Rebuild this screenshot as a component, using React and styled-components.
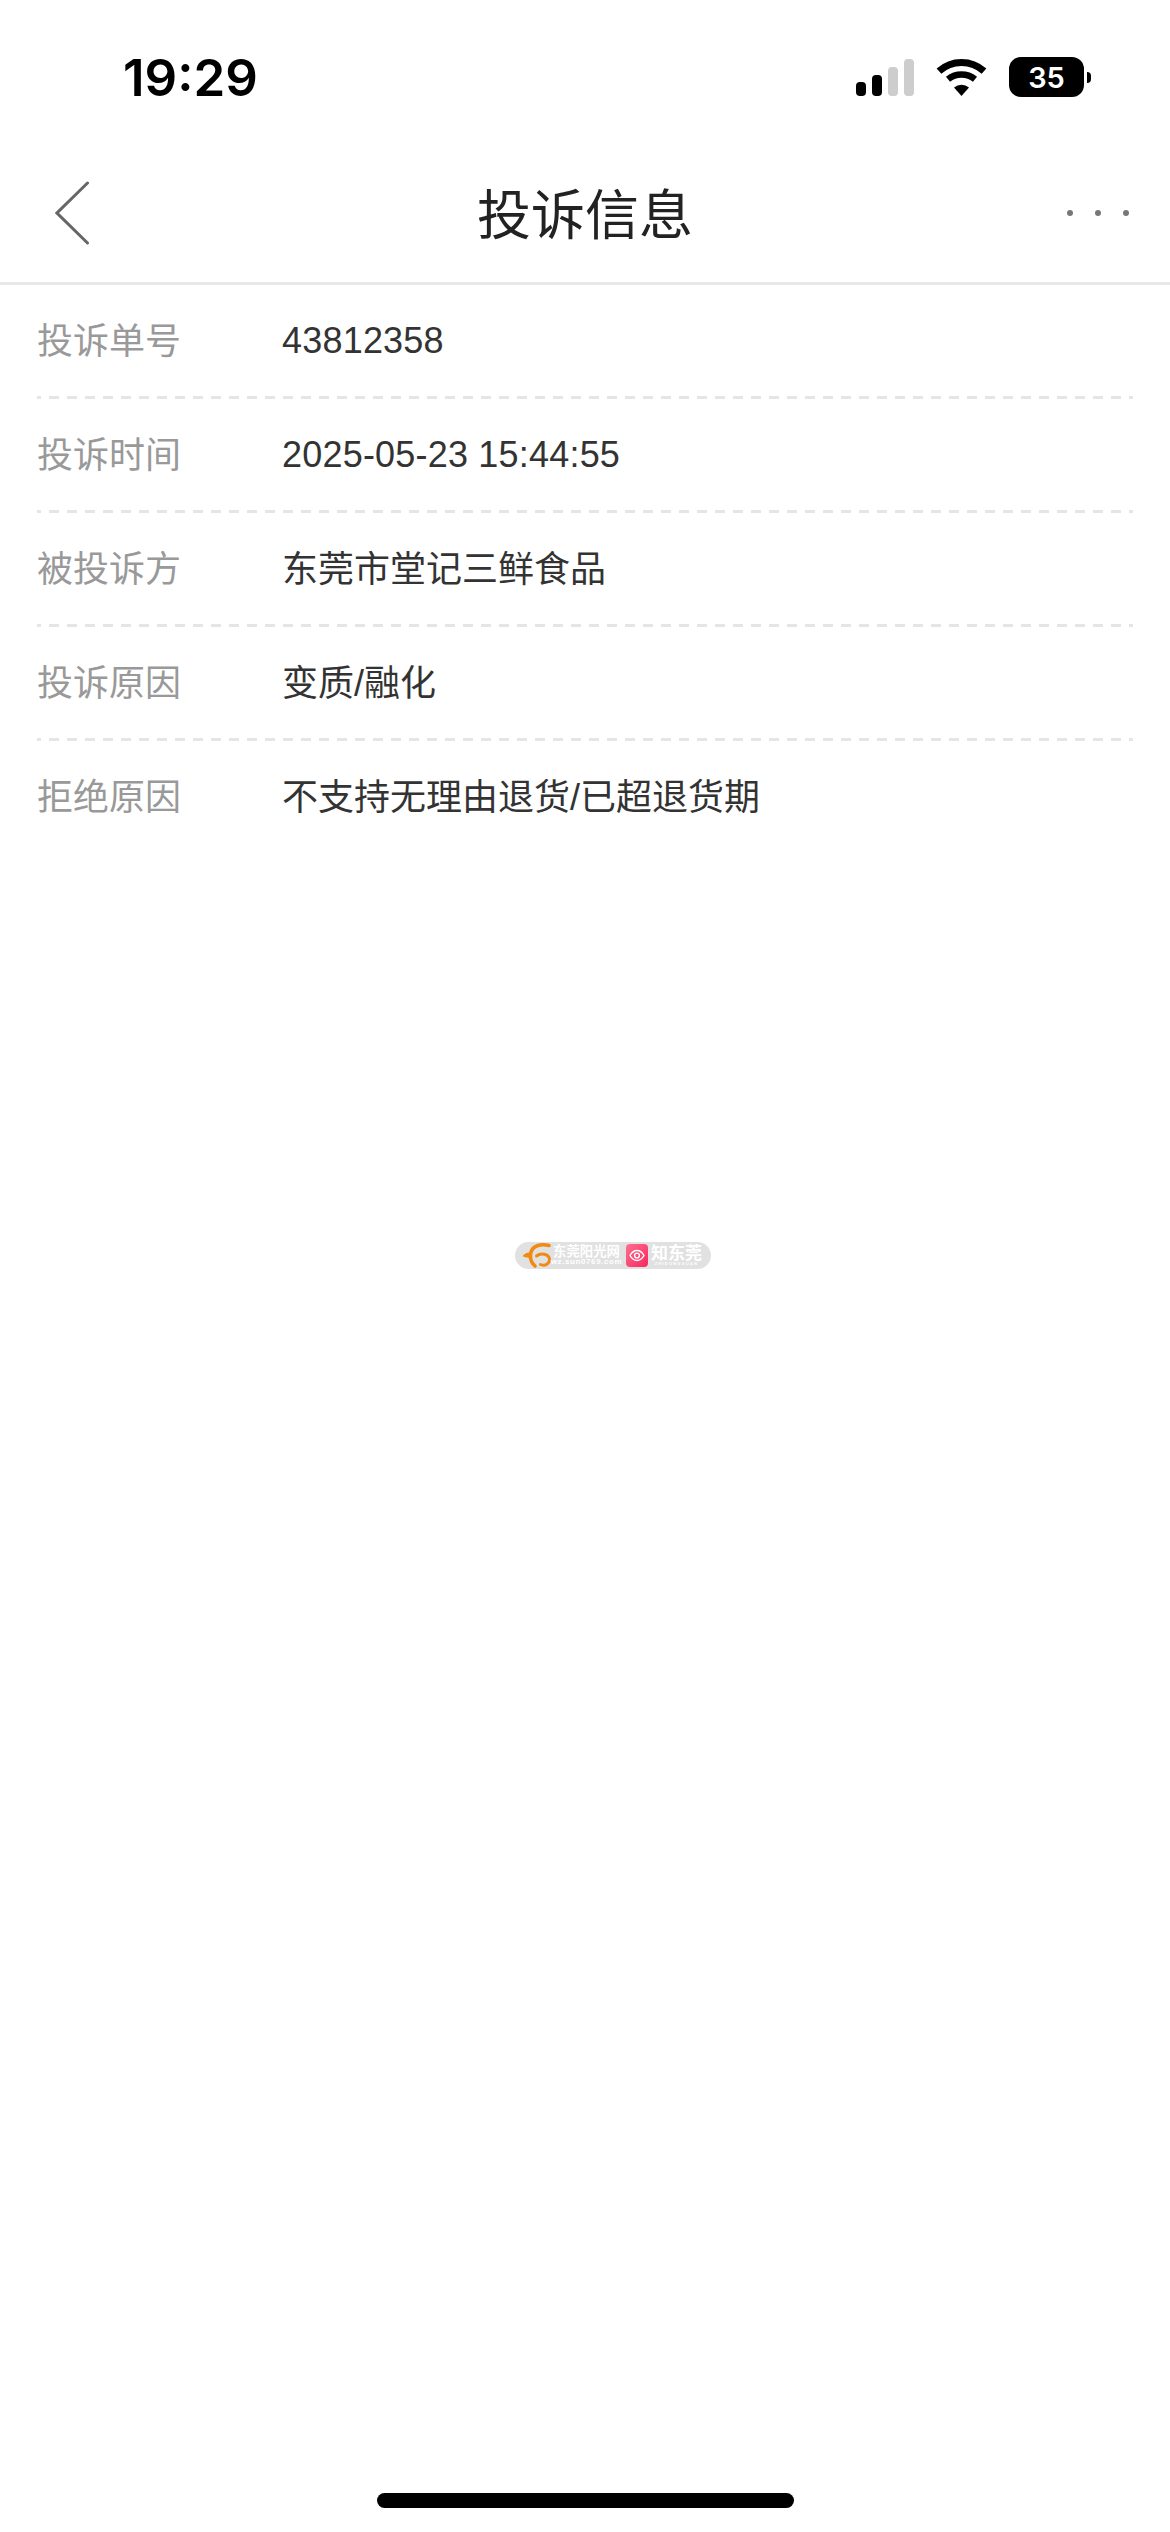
import React from 'react';
import styled, { createGlobalStyle } from 'styled-components';

const GlobalStyle = createGlobalStyle`
  html, body {
    margin: 0;
    padding: 0;
    background: #fff;
  }
`;

const Page = styled.div`
  position: relative;
  width: 1170px;
  height: 2532px;
  display: flex;
  flex-direction: column;
  overflow: hidden;
  background: #fff;
  font-family: "Liberation Sans", "Noto Sans CJK SC", sans-serif;
`;

const StatusBar = styled.div`
  height: 154px;
  display: flex;
  align-items: center;
  justify-content: space-between;
  padding: 0 79px 0 123px;
`;

const Time = styled.div`
  font-family: Inter, "Liberation Sans", sans-serif;
  font-size: 51px;
  font-weight: 600;
  color: #000;
`;

const StatusIcons = styled.div`
  display: flex;
  align-items: center;
  gap: 22px;
`;

const Signal = styled.div`
  display: flex;
  align-items: flex-end;
  gap: 6px;
`;

const Bar = styled.div`
  width: 10px;
  height: ${p => p.$h}px;
  border-radius: 4px;
  background: ${p => (p.$on ? '#000' : '#cdcdcd')};
`;

const Battery = styled.div`
  display: flex;
  align-items: center;
  gap: 3px;
`;

const BatteryBody = styled.div`
  width: 75px;
  height: 40px;
  border-radius: 12px;
  background: #000;
  color: #fff;
  display: flex;
  align-items: center;
  justify-content: center;
  font-family: Inter, "Liberation Sans", sans-serif;
  font-size: 29px;
  font-weight: 600;
`;

const BatteryNub = styled.div`
  width: 4px;
  height: 11px;
  border-radius: 0 6px 6px 0;
  background: #000;
`;

const NavBar = styled.div`
  height: 118px;
  padding: 0 41px 10px;
  display: grid;
  grid-template-columns: 1fr auto 1fr;
  align-items: center;
  border-bottom: 3px solid #e8e8e8;
`;

const BackButton = styled.div`
  display: flex;
  padding-left: 14px;
`;

const Title = styled.div`
  font-size: 54px;
  color: #222;
  padding-bottom: 3px;
`;

const MoreDots = styled.div`
  display: flex;
  justify-content: flex-end;
  gap: 22px;
`;

const Dot = styled.div`
  width: 6px;
  height: 6px;
  border-radius: 50%;
  background: #777;
`;

const InfoList = styled.div`
  padding: 0 37px;
`;

const InfoRow = styled.div`
  height: 111.1px;
  display: flex;
  align-items: center;
  font-size: 36px;
`;

const DashLine = styled.div`
  height: 3px;
  background-image: linear-gradient(90deg, #e5e5e5 10px, transparent 10px);
  background-size: 18px 3px;
  background-position: 12px 0;
`;

const Label = styled.div`
  width: 245px;
  color: #999;
  padding-bottom: 5px;
`;

const Value = styled.div`
  color: #333;
  padding-bottom: ${p => (p.$numeric ? 0 : 5)}px;
  letter-spacing: ${p => (p.$numeric ? 0.2 : 0)}px;
`;

const Watermark = styled.div`
  position: absolute;
  left: 515px;
  top: 1242px;
  width: 196px;
  height: 27px;
  box-sizing: border-box;
  padding-left: 7px;
  display: flex;
  align-items: center;
  border-radius: 14px;
  background: #e1e1e1;
  color: #fff;
`;

const MarkBlock = styled.div`
  display: flex;
  flex-direction: column;
  align-items: center;
  line-height: 1;
  white-space: nowrap;
  width: ${p => p.$w}px;
  margin: 0 ${p => p.$mr}px 0 ${p => p.$ml}px;
`;

const MarkName = styled.div`
  font-size: ${p => p.$size}px;
  font-weight: 700;
`;

const MarkSub = styled.div`
  font-size: ${p => p.$size}px;
  letter-spacing: ${p => p.$spacing}px;
  font-weight: 700;
`;

const HomeArea = styled.div`
  margin-top: auto;
  height: 39px;
  display: flex;
  justify-content: center;
`;

const HomeBar = styled.div`
  width: 417px;
  height: 15px;
  border-radius: 8px;
  background: #000;
`;

const rows = [
  ['投诉单号', '43812358', true],
  ['投诉时间', '2025-05-23 15:44:55', true],
  ['被投诉方', '东莞市堂记三鲜食品'],
  ['投诉原因', '变质/融化'],
  ['拒绝原因', '不支持无理由退货/已超退货期'],
];

const WifiIcon = () => (
  <svg width="51" height="37" viewBox="0 0 51 37" fill="none" stroke="#000">
    <path d="M3 12.2A33.5 33.5 0 0 1 48 12.2" strokeWidth="7" />
    <path d="M12 20.3A21.5 21.5 0 0 1 39 20.3" strokeWidth="6.5" />
    <path d="M25.5 37L18 28.6A11.3 11.3 0 0 1 33 28.6Z" fill="#000" stroke="none" />
  </svg>
);

const BackIcon = () => (
  <svg width="34" height="64" viewBox="0 0 34 64" fill="none" stroke="#666" strokeWidth="3" strokeLinecap="round">
    <path d="M32.5 2L2 32L32.5 62" />
  </svg>
);

const SwooshLogo = () => (
  <svg width="30" height="25" viewBox="0 0 30 25" fill="none" stroke="#f08a12" strokeLinecap="round">
    <path d="M27 2.5C18 0.5 11 3 9 9C7.5 15 9.5 20 13 23" strokeWidth="3.6" />
    <path d="M14.5 13C19 9.5 26.5 11 27.5 16C28 20.5 23 23.5 18.5 21.5" strokeWidth="3" />
    <path d="M0.5 13C3 10 6 9 9.5 9.5L9.5 15C6 14.5 3 15 0.5 13Z" fill="#f08a12" stroke="none" />
  </svg>
);

const EyeTile = () => (
  <svg width="22" height="23" viewBox="0 0 22 23" fill="none">
    <defs>
      <linearGradient id="tile" x1="0" y1="0" x2="1" y2="1">
        <stop offset="0" stopColor="#ff6f8e" />
        <stop offset="1" stopColor="#f5285f" />
      </linearGradient>
    </defs>
    <rect width="22" height="23" rx="4" fill="url(#tile)" />
    <path d="M4 11.5C6 8 8.5 6.5 11 6.5C13.5 6.5 16 8 18 11.5C16 15 13.5 16.5 11 16.5C8.5 16.5 6 15 4 11.5Z" stroke="#fff" strokeWidth="1.4" />
    <circle cx="11" cy="11.5" r="2.4" stroke="#fff" strokeWidth="1.4" />
  </svg>
);

const App = () => (
  <Page>
    <GlobalStyle />
    <StatusBar>
      <Time>19:29</Time>
      <StatusIcons>
        <Signal>
          <Bar $h={14} $on />
          <Bar $h={21} $on />
          <Bar $h={29} />
          <Bar $h={37} />
        </Signal>
        <WifiIcon />
        <Battery>
          <BatteryBody>35</BatteryBody>
          <BatteryNub />
        </Battery>
      </StatusIcons>
    </StatusBar>
    <NavBar>
      <BackButton>
        <BackIcon />
      </BackButton>
      <Title>投诉信息</Title>
      <MoreDots>
        <Dot />
        <Dot />
        <Dot />
      </MoreDots>
    </NavBar>
    <InfoList>
      {rows.map(([label, value, numeric], i) => (
        <React.Fragment key={label}>
          {i > 0 && <DashLine />}
          <InfoRow>
            <Label>{label}</Label>
            <Value $numeric={numeric}>{value}</Value>
          </InfoRow>
        </React.Fragment>
      ))}
    </InfoList>
    <Watermark>
      <SwooshLogo />
      <MarkBlock $w={67} $ml={1} $mr={6}>
        <MarkName $size={13.4}>东莞阳光网</MarkName>
        <MarkSub $size={8} $spacing={0.6}>wz.sun0769.com</MarkSub>
      </MarkBlock>
      <EyeTile />
      <MarkBlock $w={51} $ml={3} $mr={0}>
        <MarkName $size={17}>知东莞</MarkName>
        <MarkSub $size={4} $spacing={1.2}>ZHIDONGGUAN</MarkSub>
      </MarkBlock>
    </Watermark>
    <HomeArea>
      <HomeBar />
    </HomeArea>
  </Page>
);

export default App;
